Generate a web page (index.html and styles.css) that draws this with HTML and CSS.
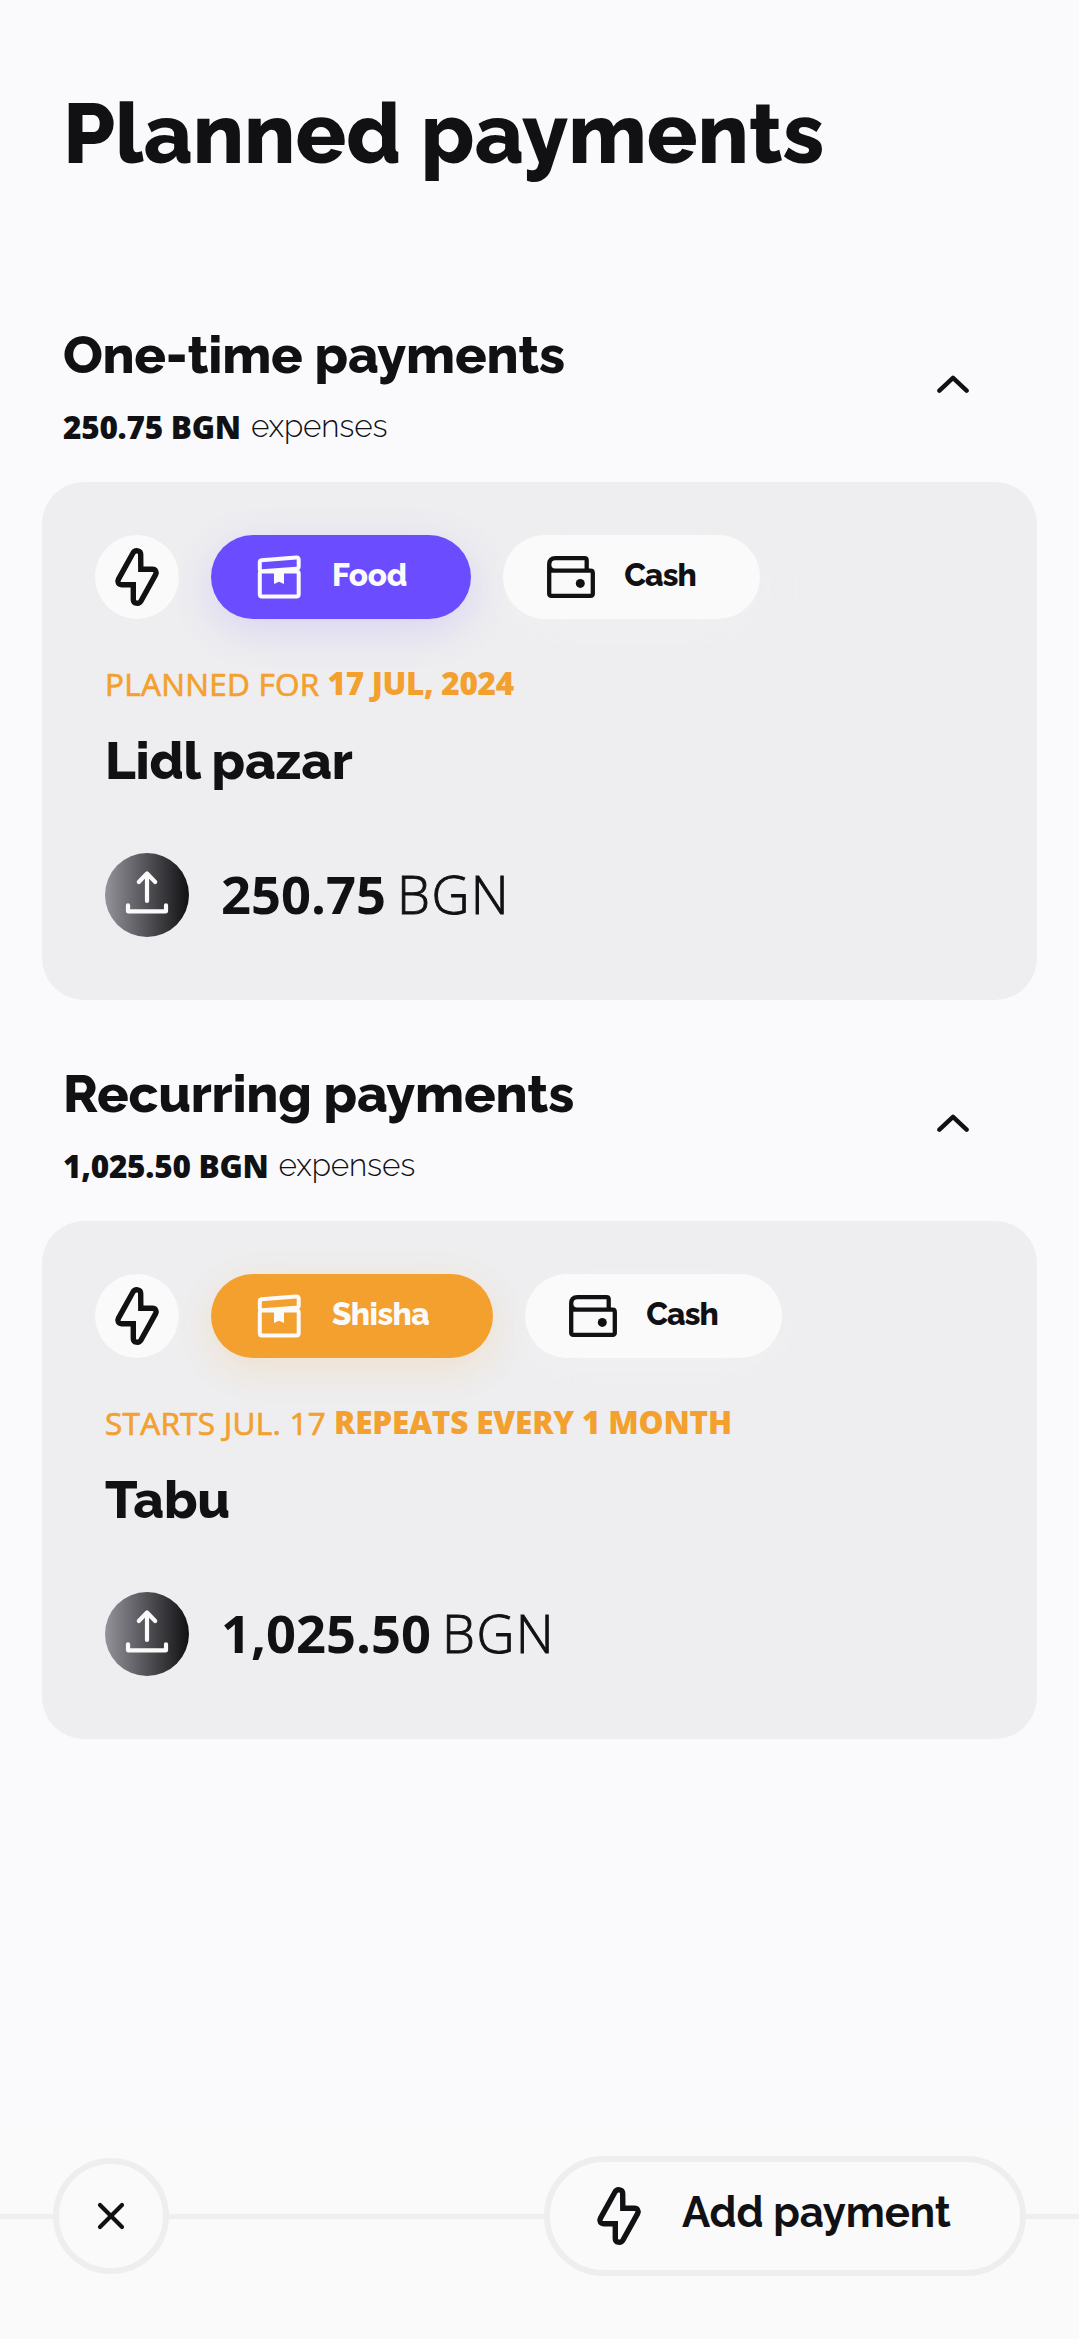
FILE: index.html
```html
<!DOCTYPE html>
<html lang="en">
<head>
<meta charset="utf-8">
<title>Planned payments</title>
<link rel="stylesheet" href="styles.css">
</head>
<body>
<svg class="sprite" aria-hidden="true">
  <symbol id="bolt" viewBox="0 0 84 84"><path d="M45.8 34.3H57.5C60.5 34.3 62 37 60.6 39.6L46 66C44 69.6 38.3 68.8 38.3 64.5V49.7H26.5C23.5 49.7 22 47 23.4 44.4L38 18C40 14.4 45.7 15.2 45.7 19.5Z" fill="none" stroke="currentColor" stroke-width="5.4"/></symbol>
  <symbol id="box" viewBox="46 20 44 44"><path d="M50.5 25.3L85.3 22.6Q87.7 22.4 87.7 24.8V31.5Q87.7 33.6 85.3 33.8L51 36.3Q48.8 36.4 48.8 34.3V27.3Q48.8 25.5 50.5 25.3ZM51 36.6H85.5Q87.7 36.6 87.7 38.8V59.3Q87.7 61.5 85.5 61.5H51Q48.8 61.5 48.8 59.3V38.8Q48.8 36.6 51 36.6Z" fill="none" stroke="currentColor" stroke-width="4"/><path d="M63 36H73V49L68 46.8L63 49Z" fill="currentColor"/></symbol>
  <symbol id="wallet" viewBox="44 20 48 44"><path d="M46.2 35.7H87.5Q89.8 35.7 89.8 38V58.6Q89.8 60.9 87.5 60.9H48.5Q46.2 60.9 46.2 58.6V29.5Q46.2 23.1 52.5 23.1H81.5Q83.7 23.1 83.7 25.3V35.7M46.2 29.5Q46.2 35.7 52 35.7" fill="none" stroke="currentColor" stroke-width="4.3"/><circle cx="77.3" cy="48.4" r="4.5" fill="currentColor"/></symbol>
  <symbol id="upload" viewBox="0 0 84 84"><path d="M42 48V20.5M33.8 29L42 20.5L50.2 29M23 52.3V58.3H61V52.3" fill="none" stroke="currentColor" stroke-width="4.2" stroke-linecap="round" stroke-linejoin="round"/></symbol>
  <symbol id="chevron" viewBox="0 0 32 20"><path d="M2.4 15.7L16 2.8L29.6 15.7" fill="none" stroke="currentColor" stroke-width="4.4" stroke-linecap="round" stroke-linejoin="round"/></symbol>
  <symbol id="close" viewBox="0 0 28 28"><path d="M3 3L25 25M25 3L3 25" fill="none" stroke="currentColor" stroke-width="4.2" stroke-linecap="round"/></symbol>
</svg>
<main class="screen">
  <h1 class="title">Planned payments</h1>

  <section class="group">
    <header class="group-head">
      <div>
        <h2 class="heading">One-time payments</h2>
        <p class="summary"><strong>250.75 BGN</strong><span>expenses</span></p>
      </div>
      <svg class="chevron"><use href="#chevron"/></svg>
    </header>
    <article class="card">
      <div class="chips">
        <span class="round"><svg><use href="#bolt"/></svg></span>
        <span class="chip violet"><svg class="icon-box"><use href="#box"/></svg><b>Food</b></span>
        <span class="chip light"><svg class="icon-wallet"><use href="#wallet"/></svg><b>Cash</b></span>
      </div>
      <p class="schedule"><span>PLANNED FOR</span><strong class="date">17 JUL, 2024</strong></p>
      <h3 class="heading name">Lidl pazar</h3>
      <div class="amount"><span class="badge"><svg><use href="#upload"/></svg></span><strong>250.75</strong><span class="currency">BGN</span></div>
    </article>
  </section>

  <section class="group">
    <header class="group-head">
      <div>
        <h2 class="heading">Recurring payments</h2>
        <p class="summary"><strong>1,025.50 BGN</strong><span>expenses</span></p>
      </div>
      <svg class="chevron"><use href="#chevron"/></svg>
    </header>
    <article class="card">
      <div class="chips">
        <span class="round"><svg><use href="#bolt"/></svg></span>
        <span class="chip orange"><svg class="icon-box"><use href="#box"/></svg><b>Shisha</b></span>
        <span class="chip light"><svg class="icon-wallet"><use href="#wallet"/></svg><b>Cash</b></span>
      </div>
      <p class="schedule"><span>STARTS JUL. 17</span><strong>REPEATS EVERY 1 MONTH</strong></p>
      <h3 class="heading name">Tabu</h3>
      <div class="amount"><span class="badge"><svg><use href="#upload"/></svg></span><strong>1,025.50</strong><span class="currency">BGN</span></div>
    </article>
  </section>

  <footer class="bar">
    <i class="rule edge"></i>
    <button class="close" aria-label="Close"><svg><use href="#close"/></svg></button>
    <i class="rule"></i>
    <button class="add"><svg><use href="#bolt"/></svg><span>Add payment</span></button>
    <i class="rule edge"></i>
  </footer>
</main>
</body>
</html>
```
FILE: styles.css
```css
* { box-sizing: border-box; }
body { margin: 0; background: #fafafd; color: #111113; font-family: Raleway, Lato, sans-serif; }
h1, h2, h3, p { margin: 0; }
.sprite { display: none; }
svg { display: block; flex: none; overflow: visible; }

.screen { display: flex; flex-direction: column; width: 1079px; height: 2339px; padding-top: 84px; overflow: hidden; }
.title { padding-left: 63px; font-size: 84px; line-height: 100px; font-weight: 800; }
.group { padding: 0 42px; margin-top: 60px; }
.title + .group { margin-top: 137px; }
.group-head { display: flex; align-items: center; justify-content: space-between; padding: 2px 68px 0 21px; margin-bottom: 35px; height: 126px; }
.heading { font-size: 52.5px; line-height: 64px; font-weight: 800; letter-spacing: -.23px; }
.summary { display: flex; align-items: flex-start; gap: 10px; margin-top: 19px; padding-bottom: 1px; font-size: 31.5px; line-height: 40px; }
.summary strong { padding-top: 1px; font-family: "Open Sans", sans-serif; font-weight: 800; line-height: 39px; letter-spacing: -.25px; }
.summary span { font-weight: 300; letter-spacing: -.15px; }
.chevron { width: 32px; height: 20px; }

.card { height: 518px; padding: 53px; border-radius: 42px; background: #eeeef0; }
.chips { display: flex; gap: 32px; }
.round { width: 84px; height: 84px; border-radius: 50%; background: #fafafa; }
.round svg, .badge svg { width: 84px; height: 84px; }
.chip { display: flex; align-items: center; height: 84px; padding: 0 64px 0 46px; border-radius: 42px; color: #fafafa; }
.chip b { padding-bottom: 4px; font-size: 31.5px; line-height: 40px; font-weight: 800; }
.icon-box { width: 44px; height: 44px; margin-right: 31px; }
.icon-wallet { width: 48px; height: 44px; margin-right: 29px; }
.violet { background: #6b4dff; box-shadow: 0 11px 42px rgba(107, 77, 255, .16); }
.orange { background: #f3a02f; box-shadow: 0 11px 42px rgba(243, 160, 47, .18); }
.light { padding-left: 44px; background: #fafafa; color: #111113; box-shadow: 0 11px 42px rgba(250, 250, 250, .25); }
.violet b { letter-spacing: -.2px; }
.orange b { letter-spacing: -.55px; }
.light b { letter-spacing: -.8px; }

.schedule { display: flex; align-items: flex-end; gap: 8px; padding: 0 0 1px 10px; margin-top: 43px; color: #f3a02f; font-family: "Open Sans", sans-serif; font-size: 31.5px; line-height: 40px; }
.schedule span { letter-spacing: .28px; -webkit-text-stroke: .7px currentColor; }
.schedule strong { padding-bottom: 1px; line-height: 41px; font-weight: 800; letter-spacing: -.18px; }
.schedule .date { letter-spacing: -.32px; }
.name { padding-left: 10px; margin-top: 24px; }
.amount { display: flex; align-items: center; padding-left: 10px; margin-top: 60px; font-family: "Open Sans", sans-serif; font-size: 52.5px; line-height: 81px; }
.amount strong, .currency { padding-bottom: 3px; }
.amount strong { margin-left: 32px; font-weight: 700; }
.currency { margin-left: 11px; font-weight: 300; letter-spacing: 1.4px; -webkit-text-stroke: .9px currentColor; }
.badge { width: 84px; height: 84px; border-radius: 50%; background: linear-gradient(90deg, #94929a, #111113); color: #fafafa; }

.bar { display: flex; align-items: center; height: 229px; margin-top: auto; padding: 46px 0 63px; background: linear-gradient(#fafafd, #fafafa 40px); }
.rule { flex: 1; height: 5px; background: #efeff0; }
.edge { flex: 0 0 53px; }
button { display: flex; align-items: center; border: 6px solid #eeeef0; background: #fafafa; color: inherit; font-family: inherit; }
.close { justify-content: center; width: 116px; height: 116px; padding: 0; border-radius: 50%; }
.close svg { width: 28px; height: 28px; }
.add { width: 482px; height: 120px; padding: 0 0 0 27px; border-radius: 60px; }
.add svg { width: 84px; height: 84px; }
.add span { margin-left: 21px; padding-bottom: 7px; font-size: 42px; line-height: 50px; font-weight: 700; letter-spacing: -.15px; white-space: nowrap; }
```
